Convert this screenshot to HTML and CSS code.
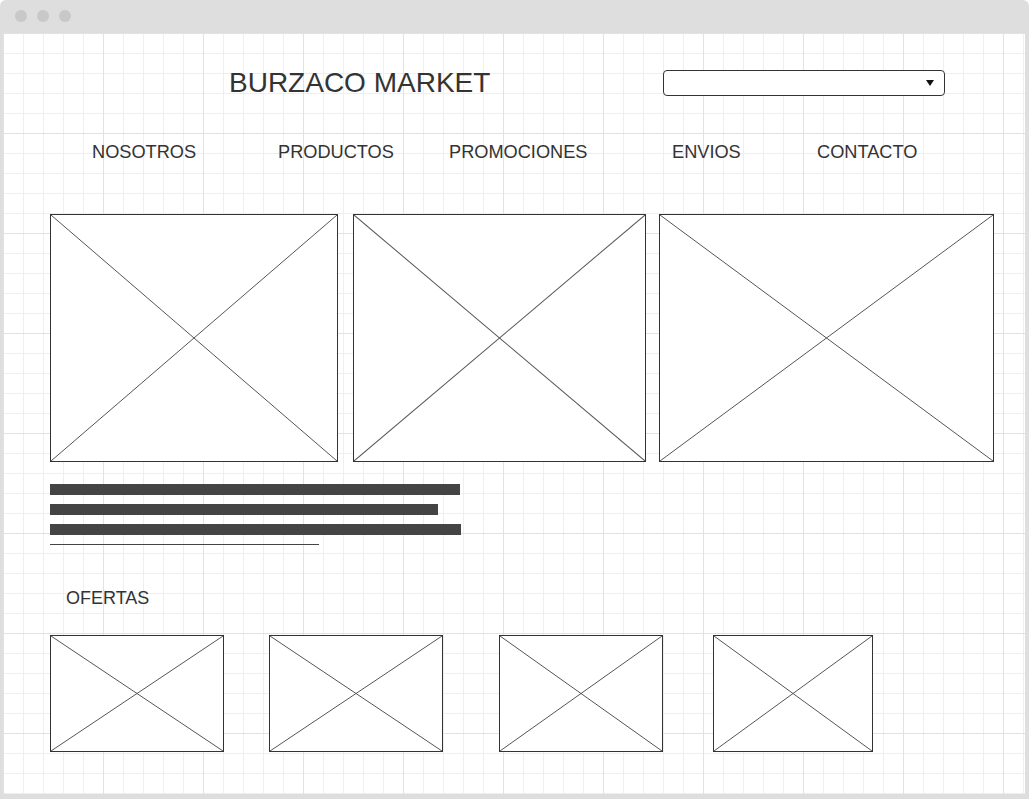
FILE: index.html
```html
<!DOCTYPE html>
<html>
	<head>
		<meta charset="utf-8">
		<title>Burzaco Market</title>
		<link rel="stylesheet" href="styles.css">
	</head>
	<body>
		<div class="window">
			<div class="titlebar">
				<span class="dot"></span>
				<span class="dot"></span>
				<span class="dot"></span>
			</div>
			<div class="canvas">
				<div class="header">
					<h1 class="brand">BURZACO MARKET</h1>
					<div class="select"><span class="arrow"></span></div>
				</div>
				<ul class="menu">
					<li>NOSOTROS</li>
					<li>PRODUCTOS</li>
					<li>PROMOCIONES</li>
					<li>ENVIOS</li>
					<li>CONTACTO</li>
				</ul>
				<!-- imagenes principales -->
				<div class="hero">
					<div class="ph ph-1"><svg viewBox="0 0 100 100" preserveAspectRatio="none"><line x1="0" y1="0" x2="100" y2="100"/><line x1="100" y1="0" x2="0" y2="100"/></svg></div>
					<div class="ph ph-2"><svg viewBox="0 0 100 100" preserveAspectRatio="none"><line x1="0" y1="0" x2="100" y2="100"/><line x1="100" y1="0" x2="0" y2="100"/></svg></div>
					<div class="ph ph-3"><svg viewBox="0 0 100 100" preserveAspectRatio="none"><line x1="0" y1="0" x2="100" y2="100"/><line x1="100" y1="0" x2="0" y2="100"/></svg></div>
				</div>
				<div class="text-lines">
					<div class="bar" style="width: 410px"></div>
					<div class="bar" style="width: 388px"></div>
					<div class="bar" style="width: 411px"></div>
					<div class="rule" style="width: 269px"></div>
				</div>
				<h2 class="section-title">OFERTAS</h2>
				<!-- ofertas -->
				<div class="offers">
					<div class="ph offer-1"><svg viewBox="0 0 100 100" preserveAspectRatio="none"><line x1="0" y1="0" x2="100" y2="100"/><line x1="100" y1="0" x2="0" y2="100"/></svg></div>
					<div class="ph offer-2"><svg viewBox="0 0 100 100" preserveAspectRatio="none"><line x1="0" y1="0" x2="100" y2="100"/><line x1="100" y1="0" x2="0" y2="100"/></svg></div>
					<div class="ph offer-3"><svg viewBox="0 0 100 100" preserveAspectRatio="none"><line x1="0" y1="0" x2="100" y2="100"/><line x1="100" y1="0" x2="0" y2="100"/></svg></div>
					<div class="ph offer-4"><svg viewBox="0 0 100 100" preserveAspectRatio="none"><line x1="0" y1="0" x2="100" y2="100"/><line x1="100" y1="0" x2="0" y2="100"/></svg></div>
				</div>
			</div>
		</div>
	</body>
</html>
```

FILE: styles.css
```css
* {
	box-sizing: border-box;
}
body {
	margin: 0;
	background-color: #fff;
	font-family: "Liberation Sans", Arial, sans-serif;
	color: #333;
}
.window {
	width: 1029px;
	height: 799px;
	background-color: #dedede;
	border-radius: 6px 6px 0 0;
	overflow: hidden;
}
.titlebar {
	height: 33px;
	display: flex;
	align-items: center;
	gap: 10px;
	padding: 0 0 1px 15px;
}
.dot {
	width: 12px;
	height: 12px;
	border-radius: 50%;
	background-color: #c8c8c8;
}
.canvas {
	margin-left: 3px;
	width: 1022px;
	height: 761px;
	padding-left: 47px;
	background-color: #fff;
	background-image:
		linear-gradient(to right, #e2e2e2 1px, transparent 1px),
		linear-gradient(to bottom, #e2e2e2 1px, transparent 1px),
		linear-gradient(to right, #efefef 1px, transparent 1px),
		linear-gradient(to bottom, #efefef 1px, transparent 1px);
	background-size: 100px 100px, 100px 100px, 20px 20px, 20px 20px;
}
.header {
	display: flex;
	align-items: flex-start;
	padding-top: 36px;
}
.brand {
	margin: 0 0 0 179px;
	font-size: 28px;
	line-height: 28px;
	font-weight: normal;
	width: 434px;
}
.select {
	margin-top: 1px;
	width: 282px;
	height: 26px;
	border: 1px solid #333;
	border-radius: 4px;
	background-color: #fff;
	display: flex;
	align-items: center;
	justify-content: flex-end;
	padding-right: 10px;
}
.arrow {
	width: 0;
	height: 0;
	border-left: 4px solid transparent;
	border-right: 4px solid transparent;
	border-top: 6px solid #111;
}
.menu {
	list-style: none;
	margin: 46px 0 0 42px;
	padding: 0;
	display: grid;
	grid-template-columns: 186px 171px 223px 145px auto;
	font-size: 18.2px;
	line-height: 18px;
}
.hero {
	display: flex;
	margin-top: 53px;
	height: 248px;
}
.ph {
	border: 1px solid #333;
	background-color: #fff;
}
.ph svg {
	display: block;
	width: 100%;
	height: 100%;
}
.ph line {
	stroke: #555;
	stroke-width: 1;
	vector-effect: non-scaling-stroke;
}
.ph-1 {
	width: 288px;
}
.ph-2 {
	width: 293px;
	margin-left: 15px;
}
.ph-3 {
	width: 335px;
	margin-left: 13px;
}
.text-lines {
	margin-top: 22px;
	display: flex;
	flex-direction: column;
	gap: 9px;
}
.bar {
	height: 11px;
	background-color: #444;
}
.rule {
	height: 1px;
	background-color: #444;
}
.section-title {
	margin: 44px 0 0 16px;
	font-size: 18px;
	line-height: 18px;
	font-weight: normal;
}
.offers {
	display: flex;
	margin-top: 28px;
	height: 117px;
}
.offer-1 {
	width: 174px;
}
.offer-2 {
	width: 174px;
	margin-left: 45px;
}
.offer-3 {
	width: 164px;
	margin-left: 56px;
}
.offer-4 {
	width: 160px;
	margin-left: 50px;
}
```
